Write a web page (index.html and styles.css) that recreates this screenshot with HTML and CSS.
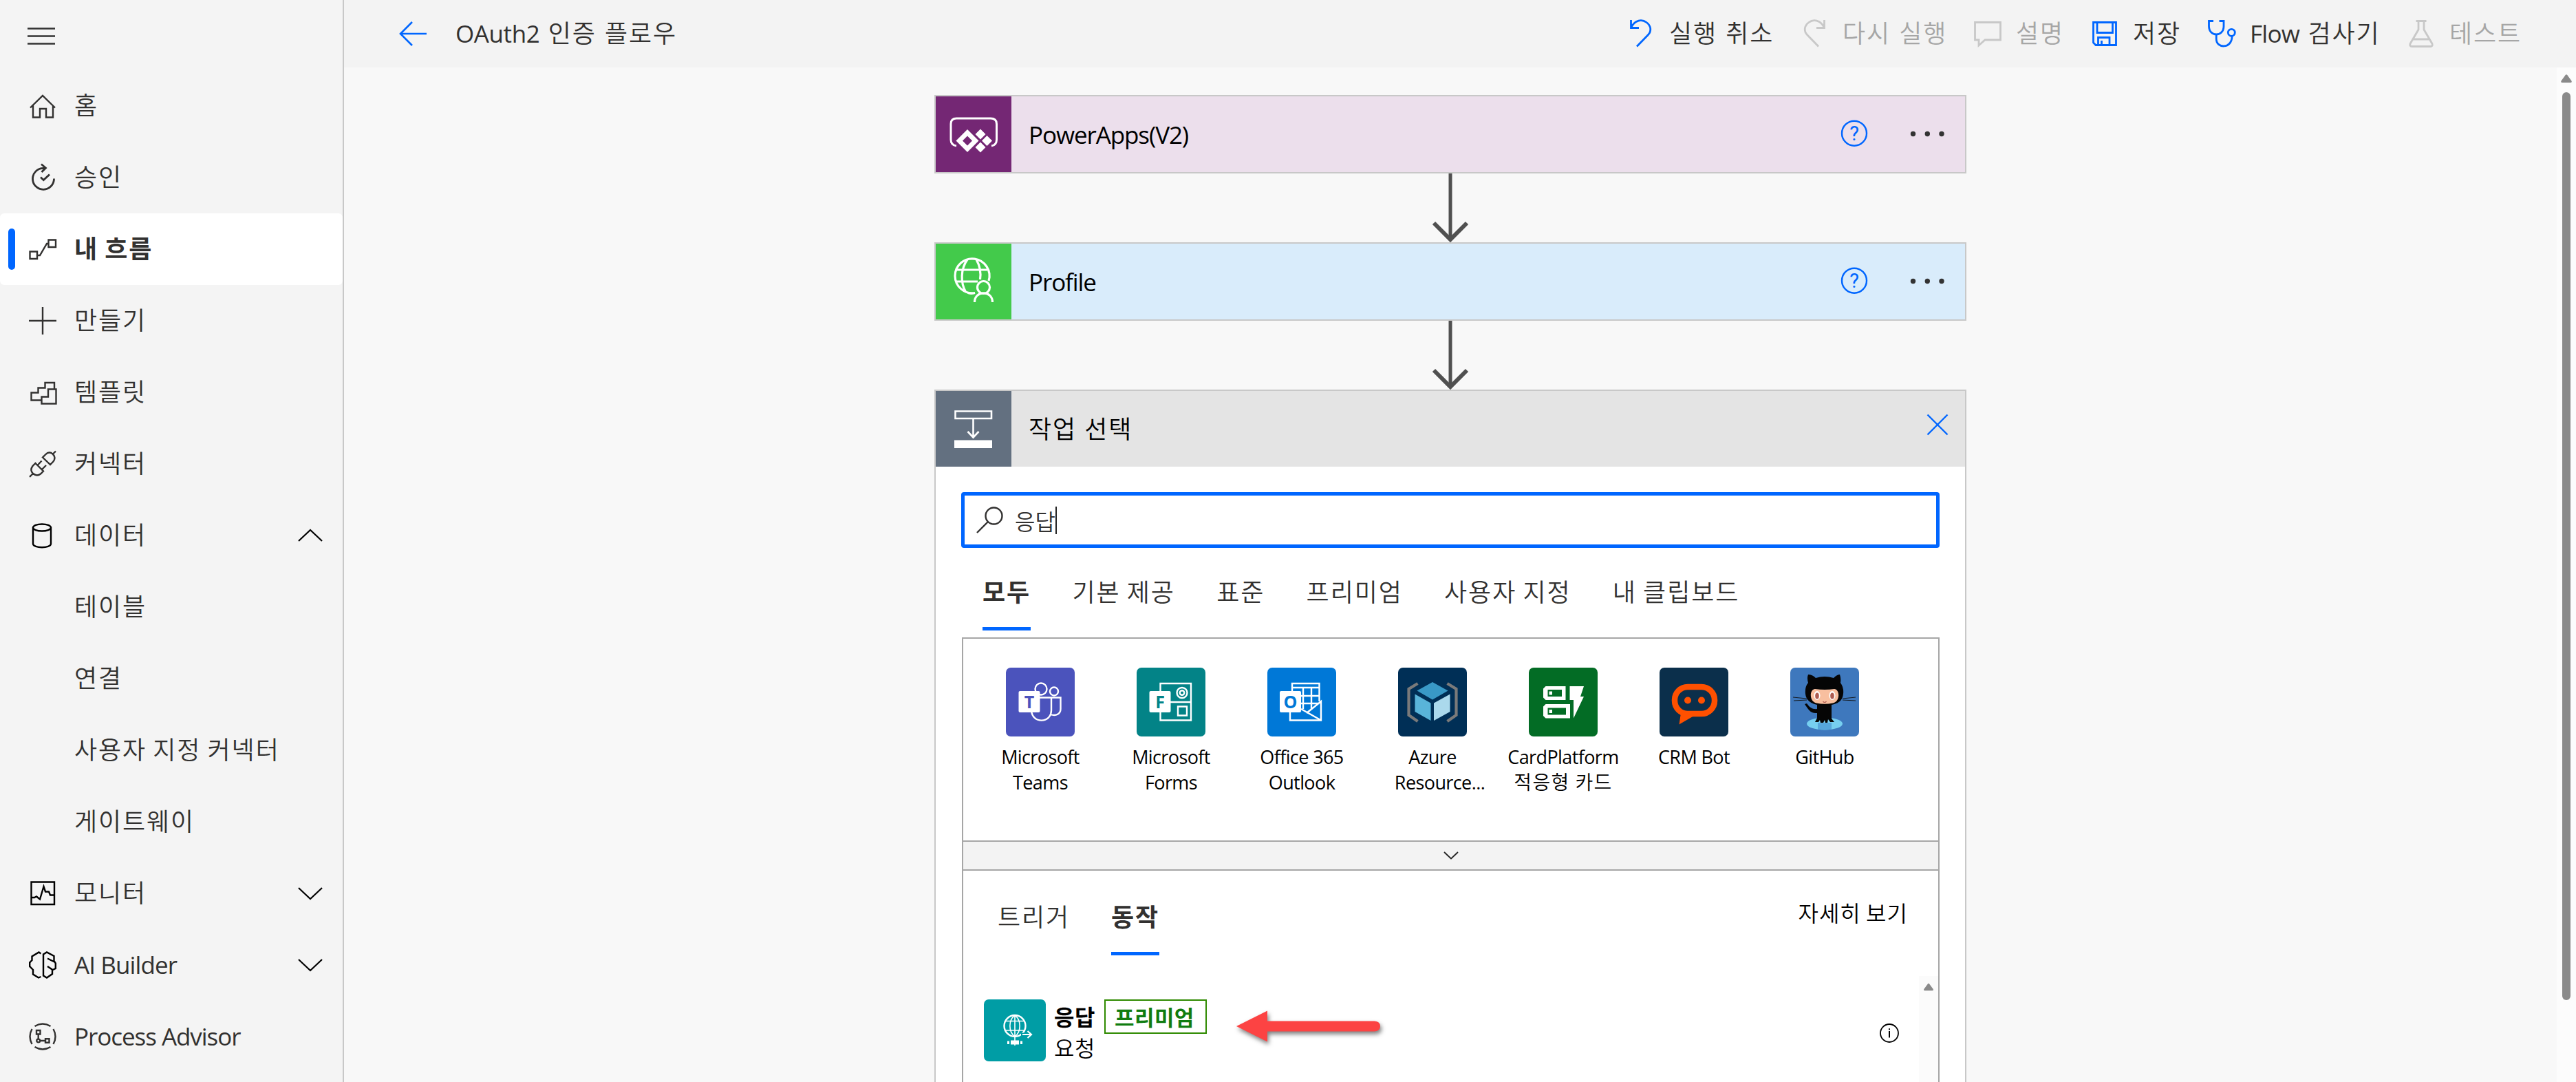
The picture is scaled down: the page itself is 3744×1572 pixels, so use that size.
FILE: index.html
```html
<!DOCTYPE html>
<html lang="ko">
<head>
<meta charset="utf-8">
<title>OAuth2 인증 플로우</title>
<link rel="stylesheet" href="styles.css">
</head>
<body>
<div class="app">
  <nav class="sidebar">
    <div class="menu-toggle">
      <svg width="40" height="26" viewBox="0 0 40 26"><path d="M0 1.5H40M0 12.5H40M0 23.5H40" stroke="#333" stroke-width="2.6"/></svg>
    </div>
    <a class="nav-item"><svg class="nav-icon" viewBox="0 0 40 40"><path d="M2 22.500L20 5 38 22.500M6 19V36.500H16V24H25V36.500H35V19"/></svg><span>홈</span></a>
    <a class="nav-item"><svg class="nav-icon thick" viewBox="0 0 40 40"><path d="M24 6.300H21A15.500 15.500 0 1 0 36.500 21.500M18 .5L24.500 6 18.500 12M17 19.500L21.300 23.500 30 15.500"/></svg><span>승인</span></a>
    <a class="nav-item selected"><i class="marker"></i><svg class="nav-icon" viewBox="0 0 40 40"><path d="M1.500 23.500H12V34H1.500ZM28.500 6.500H39V17H28.500ZM12 29H16L26 12H28.500"/></svg><span>내 흐름</span></a>
    <a class="nav-item"><svg class="nav-icon" viewBox="0 0 40 40"><path d="M0 20H40M20 0V40"/></svg><span>만들기</span></a>
    <a class="nav-item"><svg class="nav-icon" viewBox="0 0 40 40"><path d="M18.500 31.500H3.500V20.500H13.500V13.500H23.500V6H37V15.500M28 15.500H39.500V36.500H18.500V26.500H28Z"/></svg><span>템플릿</span></a>
    <a class="nav-item"><svg class="nav-icon" viewBox="0 0 40 40"><path d="M39 1.500L34.500 6M20 10.500L31 21 35 17C39 12.500 37.500 8 34.500 5.500C31.500 2.500 27.500 3 24.500 6ZM9.500 19L21 30.500 17 34.500C13 37.500 9 36.500 6 34C3 31 2.500 27 5.500 23ZM12.500 22L18.500 15.500M19 28L25 22M6 34L1 38.800"/></svg><span>커넥터</span></a>
    <a class="nav-item"><svg class="nav-icon black" viewBox="0 0 40 40"><ellipse cx="19" cy="8.500" rx="13" ry="5"/><path d="M6 8.500V32C6 39 32 39 32 32V8.500"/></svg><span>데이터</span><svg class="chev up" viewBox="0 0 36 20"><path d="M1 18L18 2 35 18"/></svg></a>
    <a class="nav-item child"><span>테이블</span></a>
    <a class="nav-item child"><span>연결</span></a>
    <a class="nav-item child"><span>사용자 지정 커넥터</span></a>
    <a class="nav-item child"><span>게이트웨이</span></a>
    <a class="nav-item"><svg class="nav-icon black" viewBox="0 0 40 40"><path d="M3.500 3.500H37V36H3.500ZM4 26H8L11 24.500 16 28.500 21.500 10 24 17.500H29L31 22.500H36.500"/></svg><span>모니터</span><svg class="chev" viewBox="0 0 36 20"><path d="M1 2L18 18 35 2"/></svg></a>
    <a class="nav-item"><svg class="nav-icon black" viewBox="0 0 40 40"><path d="M17.500 3.500L14.500 1.500 4.500 7.500V13L1.200 16.500V22L6 27V33.500L14 38.500 17.500 37M21 4.500L26 1.500 36.500 7V14L38.800 17.500V25L34 27.500V33L26 38.500 21 35.500ZM27 10.500L37 15.500M27 22L34.500 27"/></svg><span class="latin ai">AI Builder</span><svg class="chev" viewBox="0 0 36 20"><path d="M1 2L18 18 35 2"/></svg></a>
    <a class="nav-item"><svg class="nav-icon" viewBox="0 0 40 40"><path d="M4.500 9Q-1.500 20 4.500 31M35.500 9Q41.500 20 35.500 31M8.500 5Q20 -2 31.500 5M8.500 35Q20 42 31.500 35M11 11H16.500V16.500H11ZM13.700 16.500V23.500M16.500 26H24M24 23.300H29.500V28.700H24Z"/><circle cx="13.700" cy="26" r="2.400"/></svg><span class="latin pa">Process Advisor</span></a>
  </nav>

  <main class="main">
    <header class="topbar">
      <svg class="back" viewBox="0 0 40 36"><path d="M40 18H2M19 1L2 18 19 35"/></svg>
      <h1 class="title"><span class="latin">OAuth2</span> 인증 플로우</h1>
      <div class="commands">
        <div class="cmd"><svg viewBox="0 0 40 40"><path d="M5.500 0V11.500H17M5.500 11.500C11 -1 22 -1 28 3.500C35.500 9 35 17 30.500 21.500L14 38.500"/></svg><span>실행 취소</span></div>
        <div class="cmd off"><svg viewBox="0 0 40 40"><path d="M34.500 0V11.500H23M34.500 11.500C29 -1 18 -1 12 3.500C4.500 9 5 17 9.500 21.500L26 38.500"/></svg><span>다시 실행</span></div>
        <div class="cmd off"><svg viewBox="0 0 40 40"><path d="M1.500 3.500H38.500V29H16L7 37V29H1.500Z"/></svg><span>설명</span></div>
        <div class="cmd"><svg viewBox="0 0 40 40"><path d="M3.500 3.500H36.500V36.500H7L3.500 33ZM9 4V18.500H31.500V4M10.500 36V25.500H27V36M15.500 36V30"/></svg><span>저장</span></div>
        <div class="cmd"><svg viewBox="0 0 40 40"><path d="M8 1.500H1.500V9C1.500 25 23 25 23 9V1.500H16.500M12.200 21V27.500C12.200 42 35 42 35 24V23.500"/><circle cx="34.300" cy="18.300" r="5"/></svg><span><span class="latin">Flow</span> 검사기</span></div>
        <div class="cmd off"><svg viewBox="0 0 40 40"><path d="M12.500 1.500H27.500M16 1.500V14L4 34.500Q3 38.500 6.500 38.500H33.500Q37 38.500 36 34.500L24 14V1.500M8 28H32"/></svg><span>테스트</span></div>
      </div>
    </header>

    <div class="body">
      <section class="canvas">
        <div class="step">
          <div class="step-head powerapps">
            <svg class="step-icon" viewBox="0 0 110 110"><path d="M30 72C24 71 22 68 22 63V40Q22 32 30 32H80Q88.500 32 88.500 40V63C88.500 68 86.500 71 81 72" fill="none" stroke="#fff" stroke-width="3"/><path fill="#fff" fill-rule="evenodd" d="M46 48L62.500 64.500 46 81 29.500 64.500ZM46 57.500L39 64.500 46 71.500 53 64.500Z"/><path fill="#fff" d="M65 47.500L72.500 55 65 62.500 57.500 55ZM74.500 57L82 64.500 74.500 72 67 64.500ZM65 66.500L72.500 74 65 81.500 57.500 74Z"/></svg>
            <span class="step-name latin">PowerApps(V2)</span>
            <svg class="step-tools" viewBox="0 0 150 44"><circle cx="22" cy="21.700" r="18" fill="none" stroke="#06f" stroke-width="2.400"/><text x="22" y="32" class="q">?</text><g fill="#333"><circle cx="107.500" cy="22.500" r="3.700"/><circle cx="128.300" cy="22.500" r="3.700"/><circle cx="149" cy="22.500" r="3.700"/></g></svg>
          </div>
        </div>
        <svg class="link" viewBox="0 0 60 100"><path d="M30 0V94" stroke-width="5"/><path d="M6 72L30 96 54 72"/></svg>
        <div class="step">
          <div class="step-head profile">
            <svg class="step-icon" viewBox="0 0 110 110" fill="none" stroke="#fff" stroke-width="3.200"><path d="M77 54A25 25 0 1 0 57 71.500M43.500 70C36 57 36 37 46 23M59 23C64 32 66 42 64.500 52M30 38H75M30 55H61M46 71C49 73 52 73 57 71.500"/><circle cx="69.500" cy="63.500" r="9"/><path d="M56.500 85C56.500 67.500 82.500 67.500 82.500 85"/></svg>
            <span class="step-name latin">Profile</span>
            <svg class="step-tools" viewBox="0 0 150 44"><circle cx="22" cy="21.700" r="18" fill="none" stroke="#06f" stroke-width="2.400"/><text x="22" y="32" class="q">?</text><g fill="#333"><circle cx="107.500" cy="22.500" r="3.700"/><circle cx="128.300" cy="22.500" r="3.700"/><circle cx="149" cy="22.500" r="3.700"/></g></svg>
          </div>
        </div>
        <svg class="link" viewBox="0 0 60 100"><path d="M30 0V94" stroke-width="5"/><path d="M6 72L30 96 54 72"/></svg>
        <div class="step picker">
          <div class="step-head choose">
            <svg class="step-icon" viewBox="0 0 110 110"><path d="M28.500 29.500H81V40H28.500ZM54.500 40V67M46.500 59L54.500 67.500 62.500 59" fill="none" stroke="#fff" stroke-width="2.600"/><path d="M27 71.500H82V83H27Z" fill="#fff"/></svg>
            <span class="step-name">작업 선택</span>
            <svg class="close" viewBox="0 0 32 32"><path d="M1.500 1.500L30.500 30.500M30.500 1.500L1.500 30.500"/></svg>
          </div>
          <div class="picker-body">
            <div class="search">
              <svg viewBox="0 0 40 40"><circle cx="25.500" cy="13.500" r="12"/><path d="M17 22L1 38"/></svg>
              <span>응답</span><i class="caret"></i>
            </div>
            <div class="tabs">
              <span class="tab active">모두</span><span class="tab">기본 제공</span><span class="tab">표준</span><span class="tab">프리미엄</span><span class="tab">사용자 지정</span><span class="tab">내 클립보드</span>
            </div>
            <div class="results">
              <div class="connectors">
                <div class="conn">
                  <svg viewBox="0 0 100 100"><rect width="100" height="100" rx="7" fill="#4b53bc"/><g fill="none" stroke="#fff" stroke-width="2.400"><circle cx="51" cy="31" r="8.500"/><circle cx="70" cy="34.500" r="6"/><path d="M48 43.500H66V62C66 81 38 82 37 62M66 43.500H79.500V60C79.500 67 73 71 65 68"/></g><rect x="18.500" y="34" width="31" height="31" rx="2" fill="#fff"/><text x="34" y="58.500" class="glyph" fill="#4b53bc">T</text></svg>
                  <p>Microsoft<br>Teams</p>
                </div>
                <div class="conn">
                  <svg viewBox="0 0 100 100"><rect width="100" height="100" rx="7" fill="#038387"/><g fill="none" stroke="#fff" stroke-width="2.400"><path d="M34.500 23H79V76.500H34.500ZM49 50H79M60 56.500H73V69.500H60Z"/><circle cx="66" cy="36.500" r="7.500"/><circle cx="66" cy="36.500" r="3.300"/></g><rect x="18.500" y="34" width="31" height="31" rx="2" fill="#fff"/><text x="34" y="58.500" class="glyph" fill="#038387">F</text></svg>
                  <p>Microsoft<br>Forms</p>
                </div>
                <div class="conn">
                  <svg viewBox="0 0 100 100"><rect width="100" height="100" rx="7" fill="#0078d7"/><g fill="none" stroke="#fff" stroke-width="2.400"><path d="M36 34V23H75.500V49M36 29H75M49 41H75.500M49 52H75.500M52 29V60M64 29V60M33 60V76.500H78V49L57 66M49 60L78 76.500"/></g><rect x="18" y="34" width="31" height="31" rx="2" fill="#fff"/><text x="33.500" y="58.500" class="glyph" fill="#0078d7">O</text></svg>
                  <p>Office 365<br>Outlook</p>
                </div>
                <div class="conn">
                  <svg viewBox="0 0 100 100"><rect width="100" height="100" rx="7" fill="#002f56"/><path d="M50 21L72.500 33.500 50 46.500 27.500 33.500Z" fill="#3999c6"/><path d="M24.500 38.500L47.500 51.500V77L24.500 64Z" fill="#59b4d9"/><path d="M75.500 38.500L52 51.500V77L75.500 64Z" fill="#abd9ec"/><path d="M28.500 23L15.500 31V69L28.500 78M71.500 23L84.500 31V69L71.500 78" fill="none" stroke="#7a7a7a" stroke-width="4.200"/></svg>
                  <p>Azure<br><span class="wide">Resource...</span></p>
                </div>
                <div class="conn">
                  <svg viewBox="0 0 100 100"><rect width="100" height="100" rx="7" fill="#036c25"/><path fill="#fff" fill-rule="evenodd" d="M24.500 27H53.500V47H24.500L21 43.500V30.500ZM27.500 32V42H48V32ZM24.500 53H60V73.500H24.500L21 70V56.500ZM27.500 58.500V68.500H54V58.500ZM59.500 27H80L75 42H80L65 73.500V47H59.500Z"/><path fill="#fff" d="M29.500 34.500H34V39.500H29.500ZM29.500 61H34V66H29.500Z"/></svg>
                  <p>CardPlatform<br><span class="ko">적응형 카드</span></p>
                </div>
                <div class="conn">
                  <svg viewBox="0 0 100 100"><rect width="100" height="100" rx="7" fill="#0b2f4b"/><rect x="22" y="28" width="58" height="39" rx="19" fill="none" stroke="#ff5000" stroke-width="8.500"/><path d="M31 66L28.500 82.500 50 70Z" fill="#ff5000"/><circle cx="41" cy="47.500" r="5" fill="#ff5000"/><circle cx="61" cy="47.500" r="5" fill="#ff5000"/></svg>
                  <p>CRM Bot</p>
                </div>
                <div class="conn">
                  <svg viewBox="0 0 100 100"><rect width="100" height="100" rx="7" fill="#3e78bd"/><ellipse cx="50" cy="81.500" rx="26" ry="9" fill="#76cff0"/><path d="M40 80H60V90H40Z" fill="#56a7dc"/><path d="M26 10Q32 10 37 15Q50 11 63 15Q68 10 72 10Q74 16 73 22Q78 29 77 38C76 48 70 52 60 54V74L64 79H58L55 75 54 80H51L50 76 48 80H44L43 76 41 79H36L39 73V66C29 67 26 60 21 53L24 52C28 58 33 61 39 60V54C29 52 23 47 22 38Q21 28 26 22Q24 15 26 10Z" fill="#050505"/><path d="M36 31Q50 33 64 31C73 32 72 50 62 51.500Q50 54 38 51.500C28 50 27 32 36 31Z" fill="#f8bf9f"/><ellipse cx="39" cy="40.500" rx="4.500" ry="6.500" fill="#fff"/><ellipse cx="61" cy="40.500" rx="4.500" ry="6.500" fill="#fff"/><ellipse cx="39" cy="41" rx="2.800" ry="4.500" fill="#ad5c51"/><ellipse cx="61" cy="41" rx="2.800" ry="4.500" fill="#ad5c51"/><path d="M47.500 49Q50 52 52.500 49" fill="none" stroke="#ad5c51" stroke-width="1.200"/><path d="M4 43L24 45M5 48L24 47M95 43L76 45M95 48L76 47" stroke="#111" stroke-width=".9" fill="none"/></svg>
                  <p>GitHub</p>
                </div>
              </div>
              <div class="expander"><svg viewBox="0 0 22 12"><path d="M1 1L11 10.500 21 1"/></svg></div>
              <div class="ops-head">
                <span class="tab">트리거</span><span class="tab active">동작</span><a class="more">자세히 보기</a>
              </div>
              <div class="ops">
                <div class="op">
                  <svg class="op-icon" viewBox="0 0 90 90"><rect width="90" height="90" rx="7" fill="#009da5"/><g fill="none" stroke="#fff"><ellipse cx="45" cy="38.500" rx="15.500" ry="15.500" stroke-width="2.400"/><path d="M45 23V54M31 31.500H59M31 45H59M45 23C35.500 30 35.500 47 45 54C54.500 47 54.500 30 45 23M45 54V67" stroke-width="1.600"/><path d="M54 51H69M63 46L69 51 63 56" stroke="#009da5" stroke-width="5"/><path d="M56 51H69M63.500 46L69 51 63.500 56" stroke-width="2.200"/></g><path d="M34 60.500H37V65H34ZM39 59.500H51V65.500H39ZM53 60.500H56V65H53Z" fill="#fff"/></svg>
                  <div class="op-text">
                    <div class="op-title"><b>응답</b><span class="badge">프리미엄</span></div>
                    <div class="op-sub">요청</div>
                  </div>
                  <svg class="info" viewBox="0 0 28 28"><circle cx="14" cy="14" r="13" fill="none" stroke="#000" stroke-width="1.800"/><path d="M14 11V20.500M14 7.200V9.200" stroke="#000" stroke-width="2"/></svg>
                </div>
                <div class="inner-scroll"><svg viewBox="0 0 18 12"><path d="M7.500 1.200Q9 -.8 10.500 1.200L16.500 9.500Q17.500 12 15 12H3Q.5 12 1.500 9.500Z"/></svg></div>
              </div>
            </div>
          </div>
        </div>
      </section>
      <div class="scrollbar"><svg viewBox="0 0 18 12"><path d="M7.500 1.200Q9 -.8 10.500 1.200L16.500 9.500Q17.500 12 15 12H3Q.5 12 1.500 9.500Z"/></svg><i class="thumb"></i></div>
    </div>
  </main>
  <svg class="pointer" viewBox="0 0 220 60"><path d="M2 27L47 4.500V19.500H203Q211 20 211 27T203 34.500H47V49.500Z" fill="#fc4343"/></svg>
</div>
</body>
</html>
```
FILE: styles.css
```css
* { box-sizing: border-box; }
body {
  margin: 0;
  font-family: "Open Sans", "Noto Sans CJK KR", sans-serif;
  font-size: 36px;
  font-weight: 350;
  letter-spacing: 1.9px;
  word-spacing: -2px;
  color: #323130;
  background: #f8f8f8;
}
svg { display: block; flex: none; }
span, a, p, h1 { white-space: nowrap; }
.app { position: relative; display: flex; width: 3744px; height: 1572px; overflow: hidden; }
.latin { font-size: 35px; font-weight: 400; letter-spacing: -1.1px; word-spacing: 0; }

/* Left navigation */
.sidebar { width: 500px; flex: none; background: #f4f4f4; border-right: 2px solid #c8c8c8; }
.menu-toggle { height: 102px; padding: 40px 0 0 40px; }
.nav-item { display: flex; align-items: center; height: 104px; padding: 0 29px 0 42px; line-height: 50px; }
.nav-item.child { padding-left: 108px; }
.nav-icon { width: 40px; height: 40px; margin-right: 26px; fill: none; stroke: #323130; stroke-width: 2.4; overflow: visible; }
.nav-icon.thick { stroke-width: 2.8; }
.nav-icon.black { stroke: #000; }
.nav-item.selected { padding-left: 12px; background: #fff; border-radius: 6px; font-weight: 700; }
.marker { width: 10px; height: 60px; margin-right: 20px; border-radius: 5px; background: #06f; }
.chev { width: 36px; height: 20px; margin-left: auto; fill: none; stroke: #000; stroke-width: 2.2; }
.ai { letter-spacing: -.9px; }
.pa { letter-spacing: -1.05px; }

/* Command bar */
.main { flex: 1; display: flex; flex-direction: column; min-width: 0; }
.topbar { display: flex; align-items: center; height: 98px; flex: none; padding-left: 80px; background: #f3f3f3; }
.back { width: 40px; height: 36px; fill: none; stroke: #06f; stroke-width: 2.6; }
.title { width: 1703px; margin: 0 0 0 42px; font-size: 36px; font-weight: 350; line-height: 50px; word-spacing: 1px; }
.title .latin { letter-spacing: -.4px; }
.commands { display: grid; grid-template-columns: 252px 252px 170px 170px 290px 200px; word-spacing: 1px; }
.cmd { display: flex; align-items: center; gap: 21px; line-height: 50px; }
.cmd .latin { letter-spacing: -.7px; }
.cmd svg { width: 40px; height: 40px; fill: none; stroke: #06f; stroke-width: 2.8; overflow: visible; }
.cmd.off { color: #a6a6a6; }
.cmd.off svg { stroke: #c8c8c8; }

/* Flow canvas */
.body { flex: 1; display: flex; min-height: 0; }
.canvas { flex: 1; padding: 40px 0 0 858px; }
.step { width: 1500px; border: 2px solid #c8c8c8; }
.step-head { display: flex; align-items: center; height: 110px; color: #000; }
.step-icon { width: 110px; height: 110px; }
.step-name { flex: 1; margin-left: 25px; line-height: 50px; padding-top: 2px; }
.powerapps { background: #ecdfec; }
.powerapps .step-icon { background: #742774; }
.profile { background: #d9ecfb; }
.profile .step-icon { background: #43ca4b; }
.choose { background: #e4e4e4; word-spacing: 0; }
.choose .step-icon { background: #637080; }
.step-tools { width: 150px; height: 44px; margin: 0 33px 2px 0; overflow: visible; }
.q { font: 29px Roboto, sans-serif; fill: #06f; text-anchor: middle; letter-spacing: 0; }
.close { width: 32px; height: 32px; margin: 0 24px 12px 0; fill: none; stroke: #06f; stroke-width: 2.4; }
.link { width: 60px; height: 100px; margin-left: 720px; fill: none; stroke: #505050; stroke-width: 6; }

/* Action picker */
.picker { height: 1100px; background: #fff; }
.picker-body { padding: 37px 37px 0; }
.search { display: flex; align-items: center; height: 81px; border: 5px solid #06f; border-radius: 4px; padding-left: 17px; font-size: 32px; letter-spacing: 0; }
.search svg { width: 40px; height: 40px; fill: none; stroke: #323130; stroke-width: 2.4; margin-right: 16px; }
.caret { width: 2px; height: 40px; background: #222; }
.tabs { display: flex; gap: 60.4px; height: 130px; padding: 40px 0 0 31px; line-height: 50px; }
.tab { height: 80px; border-bottom: 5px solid transparent; }
.tab.active { font-weight: 700; border-color: #06f; }
.results { height: 800px; margin-left: 1px; border: 2px solid #a6a6a6; }
.connectors { display: grid; grid-template-columns: repeat(7, 190px); height: 293px; padding: 42px 0 0 17px; }
.conn { display: flex; flex-direction: column; align-items: center; color: #000; }
.conn svg { width: 100px; height: 100px; }
.conn p { margin: 11px 0 0; font-size: 27px; font-weight: 400; line-height: 37px; letter-spacing: -.6px; word-spacing: 0; text-align: center; }
.wide { margin-left: 21px; }
.ko { font-size: 28px; font-weight: 350; letter-spacing: 1.4px; word-spacing: -1px; }
.glyph { font: 700 25px "Open Sans", sans-serif; text-anchor: middle; letter-spacing: 0; }
.expander { display: flex; align-items: center; justify-content: center; height: 44px; border: solid #a6a6a6; border-width: 2px 0; background: #f3f3f3; }
.expander svg { width: 22px; height: 12px; fill: none; stroke: #222; stroke-width: 1.8; }
.ops-head { display: flex; height: 153px; padding: 43px 44px 0 50px; line-height: 50px; }
.ops-head .tab { margin-right: 60px; }
.more { margin: -6px 0 0 auto; font-size: 32px; letter-spacing: 1px; color: #000; }
.ops { display: flex; height: 200px; }
.op { display: flex; flex: 1; padding: 34px 29px 0 30px; color: #000; }
.op-icon { width: 90px; height: 90px; }
.op-text { flex: 1; margin-left: 12px; font-size: 32px; letter-spacing: .6px; }
.op-title { display: flex; align-items: center; height: 50px; }
.op-title b { margin-top: -3px; }
.badge { display: flex; align-items: center; height: 50px; width: 149px; margin-left: 13px; padding: 0 0 2px 13px; border: 2px solid #2f8a00; color: #107c10; font-weight: 700; letter-spacing: .4px; font-size: 31px; }
.op-sub { line-height: 42px; }
.info { width: 28px; height: 28px; margin-top: 35px; }
.inner-scroll { width: 28px; background: #fbfbfb; padding: 10px 0 0 6px; }
.inner-scroll svg { width: 16px; height: 12px; fill: #8a8a8a; }

.scrollbar { width: 28px; background: #fcfcfc; padding: 10px 0 0 5px; }
.scrollbar svg { width: 18px; height: 12px; fill: #8a8a8a; }
.thumb { display: block; width: 12px; height: 1319px; margin: 14px 0 0 3px; border-radius: 6px; background: #8a8a8a; }

/* Annotation laid over the picker */
.pointer { position: absolute; left: 1795px; top: 1464px; width: 220px; height: 60px; overflow: visible; filter: drop-shadow(2px 4px 3px rgba(0, 0, 0, .5)); }
```
